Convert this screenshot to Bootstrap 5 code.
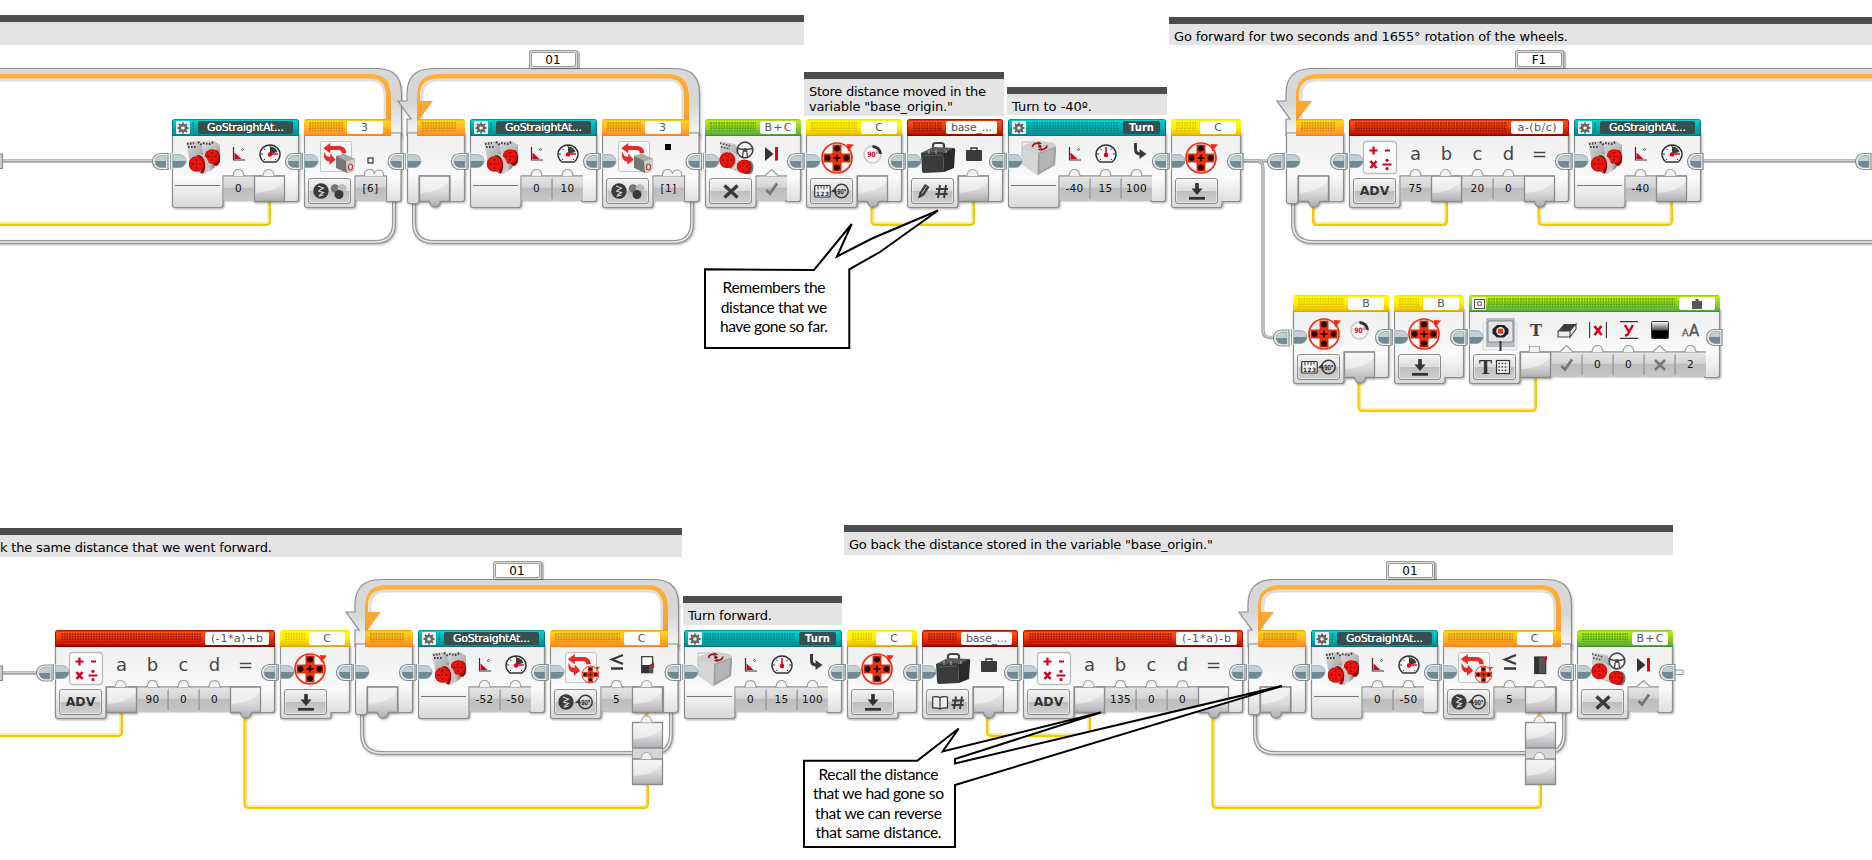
<!DOCTYPE html>
<html lang="en">
<head>
<meta charset="utf-8">
<title>Robot program</title>
<link href="https://cdn.jsdelivr.net/npm/bootstrap@5.3.0/dist/css/bootstrap.min.css" rel="stylesheet">
<style>
body{margin:0;background:#fff;font-family:"DejaVu Sans",sans-serif;color:#000}
.stage{width:1872px;height:860px}
.stage svg{display:block;overflow:visible}
.wires{left:0;top:0}
.note{background:#e4e4e4;border-top:7px solid #4d4d4d;font-size:13px;line-height:15px;padding-left:5px}
.note span,.say span,.fit{white-space:pre}
.note span{display:block;width:max-content}
.say{font-family:Lato,"Open Sans",sans-serif;font-size:15.6px;line-height:19.5px;color:#000}
.nd{height:89px}
.shape{left:0;top:0;filter:drop-shadow(1.5px 1.5px 1px rgba(0,0,0,.35))}
.hd{height:17px;border-radius:3px 3px 0 0;padding:0 5px 0 4px}
.hd.teal{background:linear-gradient(#007f82 0,#00d2d4 9%,#00b4b6 45%,#009093 92%,#006b6d);border:solid #00787a;border-width:0 1px}
.hd.orange{background:linear-gradient(#f0a000 0,#ffd61c 12%,#ffb21f 55%,#ff8a2b 95%,#e87420)}
.hd.green{background:linear-gradient(#8dc010 0,#b6ee16 12%,#8fd41c 50%,#5fae3c 90%,#3b7f2a)}
.hd.yellow{background:linear-gradient(#f0e000 0,#ffff00 12%,#fff000 50%,#e9c000 90%,#d09c00)}
.hd.red{background:linear-gradient(#b00000 0,#ff5212 14%,#f03a08 45%,#c01400 88%,#700000);border:solid #b01000;border-width:0 1px}
.grip{height:9px;margin:0 4px 2px 1px;background-size:2.67px 2.67px}
.teal .grip{background-image:radial-gradient(circle at 1px 1px,rgba(0,90,95,.75) .5px,transparent 1px)}
.orange .grip{background-image:radial-gradient(circle at 1px 1px,rgba(176,96,10,.75) .5px,transparent 1px)}
.green .grip{background-image:radial-gradient(circle at 1px 1px,rgba(30,120,20,.75) .5px,transparent 1px)}
.yellow .grip{background-image:radial-gradient(circle at 1px 1px,rgba(200,150,0,.75) .5px,transparent 1px)}
.red .grip{background-image:radial-gradient(circle at 1px 1px,rgba(95,0,0,.8) .5px,transparent 1px)}
.tag{height:13px;border-radius:2px;background:#fff;color:#555;font-size:11px;line-height:13px}
.tag.dk{background:#35504f;color:#fff;text-shadow:0 0 .6px #fff}
.tag.bd{font-weight:700;font-size:10px;text-shadow:none}
.cog{width:14px;height:13px;background:#eee;border-radius:1px;margin-left:-1px;margin-right:1px}
.pic{height:40px}
.foot{width:51px}
.slot{width:31px}
.pic .slot{padding-bottom:4px}
.pic .low{padding-bottom:0;padding-top:9px}
.pic .high{padding-bottom:10px}
.val{height:24px;font-size:10.5px;letter-spacing:.35px;color:#111;padding-top:1px}
.mode{width:43px;height:26px;margin:2px 0 0 4px;border:1px solid #8b8b8b;border-radius:3px;background:linear-gradient(#f4f4f4 0,#dcdcdc 48%,#bebebe 50%,#cfcfcf 100%);box-shadow:inset 0 0 0 1px rgba(255,255,255,.45)}
.mode b{font-size:12.5px;color:#333}
.rule{height:1px;width:45px;margin:9px 0 0 3px;background:#777}
.let{font-size:18px;color:#444;line-height:34px}
.tab{width:49px;height:18px;border:1px solid #999;border-bottom:0;border-radius:3px 3px 0 0;background:#ddd;box-shadow:2px 1px 1px rgba(0,0,0,.28);font-size:12px;line-height:15px;padding:1px 1px 0}
.tab span{height:15px;background:#fff;border:1px solid #999;border-radius:2px}
</style>
<script src="https://cdn.jsdelivr.net/npm/bootstrap@5.3.0/dist/js/bootstrap.bundle.min.js"></script>
</head>
<body>
<main class="stage position-relative overflow-hidden" id="stage"></main>
<svg width="0" height="0" class="position-absolute">
<defs>
<linearGradient id="gBody" x1="0" y1="0" x2="0" y2="1"><stop offset="0" stop-color="#f0f0f0"/><stop offset=".25" stop-color="#f3f3f3"/><stop offset=".6" stop-color="#fafafa"/><stop offset="1" stop-color="#d8d8d8"/></linearGradient>
<linearGradient id="gSlot" x1="0" y1="0" x2="0" y2="1"><stop offset="0" stop-color="#e6e6e6"/><stop offset=".47" stop-color="#d4d4d4"/><stop offset=".5" stop-color="#bdbdbd"/><stop offset="1" stop-color="#c6c6c6"/></linearGradient>
<linearGradient id="gPlug" x1="0" y1="0" x2="0" y2="1"><stop offset="0" stop-color="#f0f0f0"/><stop offset=".5" stop-color="#dcdcde"/><stop offset="1" stop-color="#aeaeb2"/></linearGradient>
<linearGradient id="gCon" x1="0" y1="0" x2="0" y2="1"><stop offset=".47" stop-color="#c2ced2"/><stop offset=".5" stop-color="#6e8a92"/></linearGradient>
<linearGradient id="gLoop" gradientUnits="userSpaceOnUse" x1="0" y1="0" x2="0" y2="136"><stop offset="0" stop-color="#d9d9d9"/><stop offset=".25" stop-color="#d6d6d6"/><stop offset=".5" stop-color="#f6f6f6"/><stop offset="1" stop-color="#dadada"/></linearGradient>
<linearGradient id="gOr" gradientUnits="userSpaceOnUse" x1="0" y1="6" x2="0" y2="68"><stop offset="0" stop-color="#ffb03a"/><stop offset=".6" stop-color="#fba532"/><stop offset="1" stop-color="#ef7d28"/></linearGradient>
<linearGradient id="gBlk" x1="0" y1="0" x2="0" y2="1"><stop offset="0" stop-color="#fff"/><stop offset=".5" stop-color="#555"/><stop offset=".55" stop-color="#000"/></linearGradient>
<linearGradient id="gMet" x1="0" y1="0" x2="1" y2="1"><stop offset="0" stop-color="#ddd"/><stop offset=".6" stop-color="#b5b5b5"/><stop offset="1" stop-color="#777"/></linearGradient>
<linearGradient id="gCyl" x1="0" y1="0" x2="1" y2="0"><stop offset="0" stop-color="#8a8a8a"/><stop offset=".5" stop-color="#eee"/><stop offset="1" stop-color="#666"/></linearGradient>
<symbol id="disc" viewBox="0 0 16 16"><circle cx="8" cy="8" r="7.800" fill="#d90d08"/><circle cx="8" cy="8" r="6.300" fill="#ee150c"/><g fill="#7a0000"><circle cx="8" cy="4" r="1.100"/><circle cx="8" cy="12" r="1.100"/><circle cx="4" cy="8" r="1.100"/><circle cx="12" cy="8" r="1.100"/><circle cx="8" cy="8" r=".7"/></g></symbol>
<symbol id="hub" viewBox="0 0 34 34"><circle cx="16" cy="17" r="15" fill="none" stroke="#f22a10" stroke-width="1.700"/><path d="M26 3 33 3.500 27 10.500Z" fill="#f22a10"/><path d="M12 4h8v9h9v8h-9v9h-8v-9H3v-8h9Z" fill="#ee3311" stroke="#b51a00" stroke-width=".8" stroke-linejoin="round"/><g fill="#2c0a05"><circle cx="16" cy="7.500" r="3"/><circle cx="16" cy="26.500" r="3"/><circle cx="6.500" cy="17" r="3"/><circle cx="25.500" cy="17" r="3"/></g><path d="M16 13.500v7M12.500 17h7" stroke="#3b0a03" stroke-width="2.200"/></symbol>
<symbol id="lp" viewBox="0 0 30 26"><path d="M0 6 8 0v3.500h9c6 0 9 3 9 8h-5c0-2.600-1.500-3.500-4-3.500H8v3.500Z" fill="#e92a26"/><path d="M1 10c2 5 4 6 7 5.500v-3.500l6 7-7 5.500v-3.500C2 21 0 16 1 10Z" fill="#e92a26"/></symbol>
<symbol id="cmp" viewBox="0 0 16 16"><circle cx="8" cy="8" r="7.700" fill="#3a3a3a"/><path d="M5 3 10.500 5 6 7.500M5 8 10.500 9.500 6.500 12M5.500 13.200 10.500 12" stroke="#d8d8d8" stroke-width="1.100" fill="none"/></symbol>
<symbol id="rot" viewBox="0 0 18 16"><circle cx="10.500" cy="8" r="6.700" fill="none" stroke="#3c3c3c" stroke-width="1.500"/><path d="M0 8.500 4.500 4.500 6 10Z" fill="#3c3c3c"/><text x="6.300" y="10.800" font-size="7" textLength="9" lengthAdjust="spacingAndGlyphs" fill="#222" stroke="#222" stroke-width=".25">90°</text></symbol>
<symbol id="stw" viewBox="0 0 18 18"><circle cx="9" cy="9" r="7.800" fill="#f6f6f6" stroke="#484848" stroke-width="1.700"/><path d="M2 7.500c4 1 10 1 14 0M7.500 9 6.500 16M10.500 9l1 7" stroke="#484848" stroke-width="1.300" fill="none"/><circle cx="9" cy="9" r="2" fill="#484848"/></symbol>
</defs></svg>
<script>
// Icon drawings: [width, height, svg markup]
const I={
motors:[34,33,'<path d="M0 1 14 0 18 10 15 20 4 22Z" fill="url(#gMet)"/><path d="M15 1 28 0 34 4 34 22 24 24 17 12Z" fill="url(#gMet)"/><path d="M1 3l7-1M2 6l9 0M17 2l6 1 5-2M12 1l4 3" stroke="#444" stroke-width="2.200" stroke-dasharray="1.600 1.400" fill="none"/><path d="M18 12C21 12 25 16 25 20L30 22 28 27 20 33 12 31Z" fill="url(#gCyl)"/><ellipse cx="30" cy="17" rx="4" ry="8" fill="#900"/><use href="#disc" x="18.500" y="8" width="15" height="15"/><path d="M10 14C20 14 21 26 15 32L19 33C26 28 24 15 14 13Z" fill="#c4c4c4"/><path d="M10 15C18 15 18 27 14 32L17 32.500C21 27 20 15 12 14Z" fill="#8d0a08"/><use href="#disc" x="2.500" y="15" width="16" height="16"/>'],
steer:[35,34,'<path d="M1 0 16 3 20 10 14 24 1 12Z" fill="url(#gMet)"/><path d="M1 2l11 3M2 6l9 2" stroke="#555" stroke-width="1.800" stroke-dasharray="1.600 1.400"/><path d="M12 12 22 16 33 22 31 32 24 33 10 27Z" fill="url(#gCyl)"/><path d="M12 11C18 14 18 25 12 28L15 28.500C21 25 20 14 15 11.500Z" fill="#d5d5d5"/><ellipse cx="30" cy="26.500" rx="4.500" ry="7" fill="#777"/><use href="#disc" x="0" y="11" width="16.500" height="16.500"/><ellipse cx="27" cy="26" rx="5.500" ry="7" fill="#a01010"/><use href="#disc" x="17.500" y="18.500" width="14" height="14"/><use href="#stw" x="17" y="0" width="18" height="18"/>'],
hub:[34,34,'<use href="#hub" width="34" height="34"/>'],
lpc:[34,33,'<rect x=".5" y=".5" width="31" height="30" rx="2" fill="#f7f7f7" stroke="#c4c4c4"/><use href="#lp" x="3" y="2" width="27" height="23"/><path d="M16 15 24 13 35 18 34 30 27 32 16 27Z" fill="#777"/><path d="M16 15 24 13 35 18 26 20Z" fill="#aaa"/><path d="M26 20 35 18 34 30 27 32Z" fill="#d0d0d0"/><ellipse cx="30.500" cy="26" rx="2" ry="3" fill="#e6e6e6" stroke="#b33" stroke-width="1.200"/>'],
lpm:[34,33,'<rect x=".5" y=".5" width="31" height="30" rx="2" fill="#f7f7f7" stroke="#c4c4c4"/><use href="#lp" x="2.500" y="2" width="27" height="23"/><use href="#hub" x="16" y="13" width="20" height="19"/>'],
cube:[34,34,'<path d="M0 8Q0 4 4 3.500L16 0 31 2Q34 3 34 7L33 24 15 34 0 23Z" fill="#b9b9b9"/><path d="M0 8Q0 4 4 3.500L16 0 31 2Q34 3 33 6L16 12Z" fill="#cfcfcf"/><path d="M16 12 33 6Q34 6 34 9L33 24 16 34Z" fill="#a0a0a0"/><path d="M17.500 13 32 7.500 31 23 17.500 31Z" fill="#b4b4b4"/><path d="M0 8 16 12 15 34 2 25Q0 23 0 20Z" fill="#d6d6d6"/><path d="M10.500 6C11 3 14 2 17 2.200M25 4.500C25 7 22 8.500 18.500 8.500" fill="none" stroke="#a11" stroke-width="1.700"/><path d="M16 .5 20 2.500 16 4ZM19.500 6.800 15.500 8.800 20 10ZM12 8l2-1.500" fill="#a11"/><circle cx="17.800" cy="5.300" r="1.600" fill="#811"/><path d="M0 15V1H15" stroke="#aaa" fill="none" stroke-width=".7"/>'],
bag:[34,32,'<path d="M12 6V3.500Q12 1 15 1H20Q23 1 23 3.500V6" fill="none" stroke="#444" stroke-width="2.200"/><path d="M0 11 12 5 34 6 22 11Z" fill="#5a5a5a"/><path d="M0 11 22 10 23 30 3 31Q1 31 1 28Z" fill="#3b3b3b"/><path d="M22 11 33 6Q35 7 34 10L33 26 23 30Z" fill="#2a2a2a"/><path d="M3 14 21 13" stroke="#5e5e5e"/><path d="M8 8v4M15 8v4M25 8v3" stroke="#999" stroke-width="1.300"/>'],
math:[34,33,'<rect x=".5" y=".5" width="33" height="32" rx="3" fill="#fcfcfc" stroke="#bdbdbd" stroke-width="1.300"/><path d="M6.500 9.500h8M10.500 5.500v8M22 9.500h5M19.500 23.500h9" stroke="#d5001c" stroke-width="2.200"/><circle cx="24" cy="19.300" r="1.600" fill="#d5001c"/><circle cx="24" cy="27.700" r="1.600" fill="#d5001c"/><path d="M7.500 20l6 7M13.500 20l-6 7" stroke="#d5001c" stroke-width="2.600"/>'],
disp:[34,34,'<path d="M0 6H34V33H0Z" fill="#f0f0f0" stroke="#ccc" stroke-width=".6"/><path d="M3 1H32V30H3Z" fill="#b6bec2"/><path d="M5 4H30V25H5Z" fill="#dfe4e4" stroke="#667" stroke-width=".7"/><path d="M14 8H21L25.500 12V16.500L21 20.500H14L9.500 16.500V12Z" fill="#222"/><circle cx="17.500" cy="14.200" r="4.200" fill="#eee"/><rect x="15" y="11.700" width="5" height="5" fill="#e33a1a"/><path d="M17.500 24V34" stroke="#333" stroke-width="2"/>'],
angle:[14,14,'<path d="M1.500 0V13H13" stroke="#333" stroke-width="1.200" fill="none"/><path d="M2.500 5.500 9.500 12H2.500Z" fill="#d5001c"/><circle cx="10.500" cy="2.500" r="1" fill="none" stroke="#444" stroke-width=".8"/>'],
gpie:[22,20,'<circle cx="11" cy="10" r="9.600" fill="#f6f6f6"/><path d="M5 18A10 9.500 0 1 1 17 18Z" fill="none" stroke="#333" stroke-width="1.500"/><path d="M11 10V2.500Q17 3 18.500 8Z" fill="#3d3d3d"/><path d="M11 10h8" stroke="#e8001c" stroke-width="1.500"/><path d="M2 10h2M5 4.500l1.500 1.500M17 16l-1-1M5 16l1-1M11 1v2" stroke="#333"/><circle cx="11" cy="10.500" r="2.200" fill="#e8001c"/>'],
gndl:[22,20,'<path d="M5 18A10 9.500 0 1 1 17 18Z" fill="#f6f6f6" stroke="#333" stroke-width="1.500"/><path d="M11 10V3" stroke="#e0001c" stroke-width="1.600"/><path d="M2 10h2M18 10h2M5 4.500l1.500 1.500M17 4.500l-1.500 1.500M17 16l-1-1M5 16l1-1" stroke="#333"/><circle cx="11" cy="11" r="2.200" fill="#d5001c"/>'],
turn:[14,16,'<g transform="translate(4,0)"><path d="M1.500 0V6Q1.500 11 6 11" stroke="#3a3a3a" stroke-width="3" fill="none"/><path d="M5.500 6 12.500 11 5.500 16Z" fill="#3a3a3a"/></g>'],
sq:[7,7,'<rect x="1" y="1" width="5" height="5" fill="#eee" stroke="#333" stroke-width="1.200"/>'],
sqf:[7,22,'<rect x="0" y="1" width="6" height="6" fill="#000"/>'],
play:[14,14,'<path d="M0 0 8.500 7 0 14Z" fill="#333"/><path d="M11.500 0V13.500" stroke="#e3001c" stroke-width="3"/>'],
deg:[19,19,'<circle cx="9.500" cy="9.500" r="8.500" fill="#f7f7f7" stroke="#c8c8c8" stroke-width="1.500"/><path d="M9.500 1.500A8 8 0 0 1 17.500 9" stroke="#333" stroke-width="3" fill="none"/><text x="4.500" y="12" font-size="7.500" font-weight="700" textLength="11" lengthAdjust="spacingAndGlyphs" fill="#d5001c">90°</text>'],
sbag:[16,14,'<path d="M5 4V1H11V4" fill="none" stroke="#333" stroke-width="1.300"/><rect y="3" width="16" height="11" rx="1" fill="#3a3a3a"/>'],
tee:[12,14,'<text x="0" y="13" font-family="DejaVu Serif" font-size="16" font-weight="700" textLength="12" lengthAdjust="spacingAndGlyphs" fill="#444">T</text>'],
erase:[18,15,'<path d="M6 1H18L12 8H0Z" fill="#3d3d3d"/><path d="M0 8H12V14H0ZM12 8 18 1V6L12 14Z" fill="#eee" stroke="#444" stroke-width="1.100"/>'],
px:[18,16,'<path d="M.6 0V16M17.400 0V16" stroke="#333" stroke-width="1.100"/><path d="M5.500 4 12.500 13M12.500 4 5.500 13" stroke="#d5001c" stroke-width="2.600"/>'],
py:[18,18,'<path d="M0 .6H18M0 17.400H18" stroke="#333" stroke-width="1.100"/><path d="M5 4 9 11M13 4 9 11Q8 15 5 14" stroke="#d5001c" stroke-width="2.400" fill="none"/>'],
grad:[18,18,'<rect x=".5" y=".5" width="17" height="17" rx="1" fill="url(#gBlk)" stroke="#333"/>'],
aa:[18,14,'<text x="0" y="13" font-size="9.500" fill="#555" stroke="#555" stroke-width=".3">A</text><text x="7" y="13" font-size="15" fill="#555" stroke="#555" stroke-width=".3">A</text>'],
le:[13,16,'<path d="M13 1 2 5.500 13 10M1 14.500H13" stroke="#3a3a3a" stroke-width="2.300" fill="none"/>'],
bx1:[13,18,'<rect x=".7" y=".7" width="11" height="16" fill="#fafafa" stroke="#333" stroke-width="1.200"/><path d="M1 9H12V17H1Z" fill="#333"/><path d="M8 9h4v8H8Z" fill="#555"/><path d="M8.500 9 13 6V12Z" fill="#e3001c"/>'],
bx2:[13,18,'<rect x=".7" y="1" width="11" height="16.500" fill="#555" stroke="#333" stroke-width="1.200"/><path d="M1 1H5V17H1Z" fill="#333"/><path d="M8 2 13 0V4.500Z" fill="#e3001c"/>'],
cog:[12,12,'<circle cx="6" cy="6" r="3" fill="none" stroke="#666" stroke-width="2.400"/><path d="M6 .5V2.500M6 9.500v2M.5 6h2M9.500 6h2M2 2l1.500 1.500M8.500 8.500 10 10M10 2 8.500 3.500M3.500 8.500 2 10" stroke="#666" stroke-width="1.800"/>'],
mini:[11,10,'<rect x=".5" y=".5" width="10" height="9" fill="#fff" stroke="#555"/><path d="M2 3.500h7M2 6.500h7" stroke="#aaa" stroke-width=".6"/><circle cx="5.500" cy="4.500" r="2" fill="none" stroke="#555"/>'],
brick:[10,10,'<path d="M3.500 0H6.500V2H10V10H0V2H3.500Z" fill="#555"/>'],
m_x:[16,15,'<path d="M1.500 1.500 14.500 13.500M14.500 1.500 1.500 13.500" stroke="#3a3a3a" stroke-width="3.400"/>'],
m_down:[16,17,'<path d="M8 0V7" stroke="#333" stroke-width="3.600"/><path d="M2.500 5.500H13.500L8 12Z" fill="#333"/><path d="M0 15.300H16" stroke="#333" stroke-width="2.800"/>'],
m_rul:[35,16,'<rect x=".7" y="2.500" width="15.500" height="11.500" rx="1" fill="#f0f0f0" stroke="#333" stroke-width="1.200"/><path d="M4 3v3.500M7 3v2.500M10 3v3.500M13 3v2.500" stroke="#333"/><text x="2" y="12.800" font-size="5.800" font-weight="700" textLength="13" fill="#333">123</text><use href="#rot" x="17" y="0" width="18" height="16"/>'],
m_pen:[30,15,'<path d="M0 14.500 1.500 8.500 7 0 11.500 3 6 11.500Z" fill="#3c3c3c"/><path d="M4 9.500 8.500 2.500" stroke="#ddd" stroke-width=".9"/><path d="M22 1 20 14M28 1 26 14M18 5H30M17.500 10H29.500" stroke="#3a3a3a" stroke-width="1.900"/>'],
m_book:[32,15,'<path d="M8 2.500V14M.7 2Q5 1 8 2.500 11 1 15.500 2V13Q11 12.500 8 14 5 12.500.7 13Z" fill="#eee" stroke="#333" stroke-width="1.200"/><path d="M24 1.500 22 14M30 1.500 28 14M20 5.500H32M19.500 10H31.500" stroke="#3a3a3a" stroke-width="1.900"/>'],
m_cc:[33,16,'<use href="#cmp" width="16" height="16"/><circle cx="22" cy="5.500" r="4.300" fill="#777"/><circle cx="29" cy="5.500" r="4.300" fill="#bbb"/><circle cx="26" cy="11.500" r="4.500" fill="#3a3a3a"/>'],
m_cr:[35,16,'<use href="#cmp" width="16" height="16"/><use href="#rot" x="17" width="18" height="16"/>'],
m_tg:[31,16,'<text x="0" y="14.500" font-family="DejaVu Serif" font-size="18" font-weight="700" textLength="13" lengthAdjust="spacingAndGlyphs" fill="#333">T</text><rect x="17.500" y="1.500" width="13" height="13" fill="#f4f4f4" stroke="#333" stroke-width="1.200"/><path d="M19.500 4.500h9.500M19.500 7.900h9.500M19.500 11.300h9.500" stroke="#333" stroke-width="1.500" stroke-dasharray="1.500 1.600"/>'],
v_ok:[13,13,'<path d="M1.500 8 5 11.500 12 1.500" stroke="#777" stroke-width="2.800" fill="none"/>'],
v_no:[12,12,'<path d="M1 1 11 11M11 1 1 11" stroke="#777" stroke-width="2.600"/>']
};
const ic=(n,c='')=>{const a=I[n];return `<svg class="${c} flex-shrink-0" width="${a[0]}" height="${a[1]}" viewBox="0 0 ${a[0]} ${a[1]}">${a[2]}</svg>`};
// Sequence connectors
const conL=(x,y)=>`<g transform="translate(${x},${y})"><path d="M-2 0H2V15H-2Z" fill="#f4f4f4"/><path d="M-1.500 -.5V15.500" stroke="#999" fill="none"/><path d="M.5 1H7.500A6.300 6.300 0 0 1 7.500 14H.5Z" fill="url(#gCon)" stroke="#7f979e" stroke-width=".6"/></g>`;
const conR=(x,y)=>`<g transform="translate(${x},${y})"><path d="M16 .5H8.500A8 8 0 0 0 8.500 16.500H16Z" fill="#f3f3f3" stroke="#8a8a8a" stroke-width="1.200"/><path d="M14 2.500H9A6 6 0 0 0 9 14.500H14Z" fill="url(#gCon)" stroke="#7f979e" stroke-width=".6"/></g>`;
// Value: number/text = plain slot, 'P' = wired input, 'O' = wired output; bump: r round, t triangle, d double, q square
function bump(cx,t,fill){
 const p={r:`M${cx-7} 57Q${cx-5} 57 ${cx-5} 55A5 4.500 0 0 1 ${cx+5} 55Q${cx+5} 57 ${cx+7} 57`,t:`M${cx-7} 57 ${cx} 50.500 ${cx+7} 57`,
 d:`M${cx-6} 57V55A4.500 4 0 0 1 ${cx+4} 55 4.500 4 0 0 1 ${cx+13} 55V57`,q:`M${cx-5} 57V51.500H${cx+5}V57`}[t];
 return `<path d="${p}" fill="${fill}" stroke="#999" stroke-width="1.100"/>`}
function plug(x,out,t){
 return `<path d="M${x} 57H${x+30}V82.500H${x+(out?21:30)}${out?`Q${x+20} 88 ${x+15.500} 88 ${x+11} 88 ${x+10} 82.500`:''}H${x}Z" fill="url(#gPlug)" stroke="#8c8c8c" stroke-width="1.300"/><path d="M${x+1} 74Q${x+20} 73 ${x+29} 63V58H${x+1}Z" fill="#fff" opacity=".45"/>`+(out?'':bump(x+14,t||'r','#f2f2f2').replace('#999','#aaa'))}
function node(o){
 const F=o.start?12:51,n=o.vals.length,W=o.w||F+31*n+(o.end?15.500:14),fb=o.start?85:89,rx=n?W-15:F;
 let s=`<path d="M.5 14H${W-.5}V80Q${W-.5} 82.500 ${W-3} 82.500H${rx}${n?`V57H${F}`:''}V${fb-3}Q${F} ${fb-.5} ${F-3} ${fb-.5}H3Q.5 ${fb-.5} .5 ${fb-3}Z" fill="url(#gBody)" stroke="#8e8e8e" stroke-width="1.200"/>`;
 o.vals.forEach((v,i)=>{const x=F+31*i;
  if(v==='P'||v==='O')s+=plug(x+.5,v==='O',(o.b||'')[i]);
  else s+=`<rect x="${x+.5}" y="57" width="30.500" height="24" fill="url(#gSlot)"/><path d="M${x} 57H${x+31}" stroke="#999" stroke-width="1.100"/>`+(i&&!'PO'.includes(o.vals[i-1])?`<path d="M${x} 60V80" stroke="#8b8b8b"/>`:'')+bump(x+15.500,(o.b||'')[i]||'r','#f4f4f4')});
 const sh=`<svg class="shape position-absolute" width="${W}" height="89">${s}</svg>`;
 const hw=o.end?W-11:o.start?48:W;
 const tag=o.tag===undefined?'':`<span class="tag ${o.dk||''} d-flex align-items-center justify-content-center" style="width:${o.tw||36}px">${o.tag==='#'?ic('brick'):`<span class="fit" data-w="${o.fw||''}">${o.tag}</span>`}</span>`;
 const hd=`<div class="hd ${o.c} position-relative d-flex align-items-center" style="width:${hw}px;margin-left:${o.start?10:0}px${o.end?';padding-right:8px':''}">${o.cog?`<span class="cog d-flex align-items-center justify-content-center">${ic(o.cog)}</span>`:''}<span class="grip flex-grow-1"></span>${tag}</div>`;
 const pos={sq:'low',turn:'high',le:'high'};
 const pics=`<div class="pic d-flex position-relative"><div class="foot d-flex align-items-center justify-content-end" style="width:${F}px;padding-right:${o.pr??3}px;padding-top:3px">${o.main?ic(o.main):''}</div>${o.vals.map((v,i)=>{const p=(o.p||[])[i];return `<div class="slot d-flex align-items-center justify-content-center ${pos[p]||''} ${p&&p.length==1?'let':''}">${!p?'':p.length==1?p:ic(p)}</div>`}).join('')}</div>`;
 const mode=o.start?'':o.mode?`<div class="mode d-flex align-items-center justify-content-center">${o.mode==='ADV'?'<b>ADV</b>':ic(o.mode)}</div>`:'<div class="rule"></div>';
 const vals=`<div class="d-flex position-relative"><div style="width:${F}px">${mode}</div>${o.vals.map(v=>`<div class="slot val d-flex align-items-center justify-content-center">${'PO'.includes(v)?'':v[0]==='v'?ic(v):v}</div>`).join('')}</div>`;
 return `<div class="nd position-absolute" style="left:${o.x}px;top:${o.y}px;width:${W}px">${sh}${hd}${pics}${vals}<svg class="position-absolute top-0 start-0" width="${W}" height="89">${conL(0,34.500)}${conR(W-14,34)}</svg></div>`}
// Loop frame between edges l and r around header line y, with its name tab
function loop(l,r,y,name,tx){
 const t=y-51,w=r-l,X=w,
 s=`<g filter="drop-shadow(1px 1px 1px rgba(0,0,0,.25))"><path d="M0 70V51L4 51-9 33H0V26Q0 .5 26 .5H${X-25}Q${X} .5 ${X} 26V70H${X-11}V26Q${X-11} 8 ${X-28} 8H28Q11 8 11 26V70Z" fill="url(#gLoop)"/></g><path d="M0 68V51L4 51-9 33H0V26Q0 .5 26 .5H${X-25}Q${X-.5} .5 ${X-.5} 26V68" fill="none" stroke="#8f8f8f" stroke-width="1.200"/>
 <path d="M15 50V28Q15 12 31 12H${X-31}Q${X-17} 12 ${X-17} 28V66" fill="none" stroke="#888" stroke-opacity=".28" stroke-width="3"/>
 <path d="M10 66V28Q10 6 32 6H${X-32}Q${X-11} 6 ${X-11} 28V68H${X-16}V28Q${X-16} 10.600 ${X-32} 10.600H32Q13 10.600 13 27V33H26L13 50V68Z" fill="url(#gOr)"/>`;
 const low=`M7 134V155Q7 174 27 174H${X-27}Q${X-8} 174 ${X-8} 155V130`;
 return `<svg class="position-absolute" style="left:${l}px;top:${t}px" width="${w}" height="136"><g fill="none"><path d="${low}" stroke="#999" stroke-width="4" filter="drop-shadow(1px 1px 1px rgba(0,0,0,.3))"/><path d="${low}" stroke="#ececec" stroke-width="1.500"/></g>${s}</svg>${name?`<div class="tab position-absolute" style="left:${tx}px;top:${t-18}px"><span class="d-block text-center">${name}</span></div>`:''}`}
function wire(x1,y1,yb,x2,y2){
 const p=(d)=>`M${x1+d} ${y1}V${yb-5}Q${x1+d} ${yb-d} ${x1+5} ${yb-d}H${x2-5}Q${x2-d} ${yb-d} ${x2-d} ${yb-5}V${y2}`;
 return `<path d="${p(2.700)}" stroke="#f7e591" stroke-width="2"/><path d="${p(1)}" stroke="#f8c700" stroke-width="2.100"/>`}
const seq=d=>`<path d="${d}" stroke="#a2a2a2" stroke-width="3.400"/><path d="${d}" stroke="#cfcfcf" stroke-width="1.200" transform="translate(0,-.6)"/>`;
const note=(x,y,w,h,pt,lines,fw)=>`<div class="note position-absolute" style="left:${x}px;top:${y}px;width:${w}px;height:${h}px;padding-top:${pt+1}px${x?'':';padding-left:0'}">${lines.map((t,i)=>`<span data-w="${fw[i]}">${t}</span>`).join('')}</div>`;
const go=(x,y,a,b)=>({x,y,c:'teal',cog:'cog',tag:'GoStraightAt...',tw:95,fw:77,dk:'dk',main:'motors',vals:[a,b],p:['angle','gpie']});
const coast=(x,y,t)=>({x,y,c:'yellow',tag:t,main:'hub',mode:'m_down',vals:[],w:70,pr:3});
const math=(x,y,t,tw,fw,v)=>({x,y,c:'red',tag:t,tw,fw,main:'math',mode:'ADV',vals:v,p:['a','b','c','d','=']});
const turn=(x,y,a)=>({x,y,c:'teal',cog:'cog',tag:'Turn',tw:37,dk:'dk bd',fw:25,main:'cube',vals:[a,'15','100'],p:['angle','gndl','turn']});
const drive=(x,y)=>({x,y,c:'green',tag:'B+C',fw:27,main:'steer',mode:'m_x',vals:['v_ok'],b:'t',p:['play'],pr:2});
const A=119,B=295,C=630;
const nodes=[
 go(172,A,'0','P'),{x:304,y:A,end:1,c:'orange',tag:'3',main:'lpc',mode:'m_cc',vals:['[6]'],b:'d',p:['sq'],pr:1},
 {x:407,y:A,start:1,c:'orange',vals:['O'],w:58},go(470,A,'0','10'),{x:602,y:A,end:1,c:'orange',tag:'3',main:'lpc',mode:'m_cc',vals:['[1]'],b:'d',p:['sqf'],pr:1},
 drive(705,A),{x:806,y:A,c:'yellow',tag:'C',main:'hub',mode:'m_rul',vals:['O'],p:['deg'],pr:2},
 {x:907,y:A,c:'red',tag:'base_...',tw:51,fw:41,main:'bag',mode:'m_pen',vals:['P'],p:['sbag']},
 turn(1008,A,'-40'),coast(1171,A,'C'),
 {x:1286,y:A,start:1,c:'orange',vals:['O'],w:58},math(1349,A,'a-(b/c)',52,39,['75','P','20','0','O']),go(1574,A,'-40','P'),
 {x:1293,y:B,c:'yellow',tag:'B',main:'hub',mode:'m_rul',vals:['O'],p:['deg'],pr:2},coast(1394,B,'B'),
 {x:1469,y:B,c:'green',cog:'mini',tag:'#',main:'disp',mode:'m_tg',vals:['P','v_ok','0','0','v_no','2'],b:'qtrrtr',p:['tee','erase','px','py','grad','aa']},
 math(55,C,'(-1*a)+b',64,52,['P','90','0','0','O']),coast(280,C,'C'),
 {x:355,y:C,start:1,c:'orange',vals:['O'],w:58},go(418,C,'-52','-50'),{x:550,y:C,end:1,c:'orange',tag:'C',main:'lpm',mode:'m_cr',vals:['5','P'],p:['le','bx1'],pr:2},
 turn(684,C,'0'),coast(847,C,'C'),{x:922,y:C,c:'red',tag:'base_...',tw:51,fw:41,main:'bag',mode:'m_book',vals:['O'],p:['sbag']},
 math(1023,C,'(-1*a)-b',61,49,['P','135','0','0','O']),
 {x:1248,y:C,start:1,c:'orange',vals:['O'],w:58},go(1311,C,'0','-50'),{x:1443,y:C,end:1,c:'orange',tag:'C',main:'lpm',mode:'m_cr',vals:['5','P'],p:['le','bx2'],pr:2},
 drive(1577,C)];
const stack=x=>`<g transform="translate(${x},0)"><rect x="0" y="745" width="30" height="16" fill="#d6d6d6" stroke="#999"/><g transform="translate(0,665.500)">${plug(0,false)}</g><g transform="translate(0,702)">${plug(0,false)}</g></g>`;
const rail=`<svg class="wires position-absolute" width="1872" height="860" fill="none">
${seq('M3 161H154')}${seq('M1241 161H1268')}${seq('M1242 161H1257Q1263 161 1263 168V330Q1263 337.500 1270 337.500H1275')}${seq('M1702 161H1857')}${seq('M3 673H38')}
<path d="M1673 670H1683V674.500H1673" fill="#f4f4f4" stroke="#9a9a9a" stroke-width="1"/>
<path d="M0 154H2.500V168.500H0M0 666H2.500V680.500H0" fill="#c2ced2" stroke="#8a8a8a" stroke-width="1.200"/>
${wire(-30,200,226,271,201)}${wire(870.500,205,226,975,200)}${wire(1312,206,226,1448,200)}${wire(1537.500,206,226,1673,200)}${wire(1357.500,382,412,1537,376)}
${wire(-30,700,737,123,711)}${wire(243.500,716,809,649,784)}${wire(986,716,737,1091,711)}${wire(1211.500,716,809,1542,784)}
<path d="M646.500 711V719M1539.500 711V719" stroke="#f8c700" stroke-width="4"/></svg>`;
const over=`<svg class="wires position-absolute" width="1872" height="860" fill="none">${conR(152,153)}${conR(1267,153)}${conR(1273,329.500)}${conR(1855,153)}${conR(36,664.500)}
${stack(632.500)}${stack(1525.500)}
<g fill="#fff" stroke="#000" stroke-width="2"><path d="M705 269.300 814 270 851.700 224 837 256.500 872 238.500 938 210.500 880 252 849.300 269.300V348H705Z"/><path d="M804 760.700H917.300L958.700 728.500 942.700 751.500 1100.700 712.500 955 759V763.500L1282 686 955 785V847H804Z"/></g></svg>`;
const say=(x,y,w,lines)=>`<div class="say position-absolute d-flex flex-column align-items-center" style="left:${x}px;top:${y}px;width:${w}px">${lines.map(([t,f])=>`<span data-w="${f}">${t}</span>`).join('')}</div>`;
document.getElementById('stage').innerHTML=
 note(0,15,804,30,4,[],[])+note(804,72,200,44,4,['Store distance moved in the','variable "base_origin."'],[177,144])+note(1007,87,160,28,4,['Turn to -40º.'],[80])
 +note(1169,17,703,28,4,['Go forward for two seconds and 1655° rotation of the wheels.'],[394])+note(0,528,682,29,4,['k the same distance that we went forward.'],[272])
 +note(683,596,159,29,4,['Turn forward.'],[84])+note(844,525,829,30,4,['Go back the distance stored in the variable "base_origin."'],[364])
 +loop(-300,402,A)+loop(407,700,A,'01',528.500)+loop(1286,2100,A,'F1',1514.500)+loop(355,679,C,'01',492.500)+loop(1248,1572,C,'01',1385.500)
 +rail+nodes.map(node).join('')+over
 +say(705,278,138,[['Remembers the',103],['distance that we',106.500],['have gone so far.',108]])
 +say(804,764.500,149,[['Recall the distance',120],['that we had gone so',131],['that we can reverse',127],['that same distance.',126]]);
// Spread letters so that each line fills its set width
document.querySelectorAll('[data-w]').forEach(e=>{const w=+e.dataset.w;if(!w)return;const n=e.textContent.length,c=e.getBoundingClientRect().width;e.style.letterSpacing=(w-c)/(n-1)+'px';if(!e.closest('.note'))e.style.marginRight=-(w-c)/(n-1)+'px'});
</script>
</body>
</html>
